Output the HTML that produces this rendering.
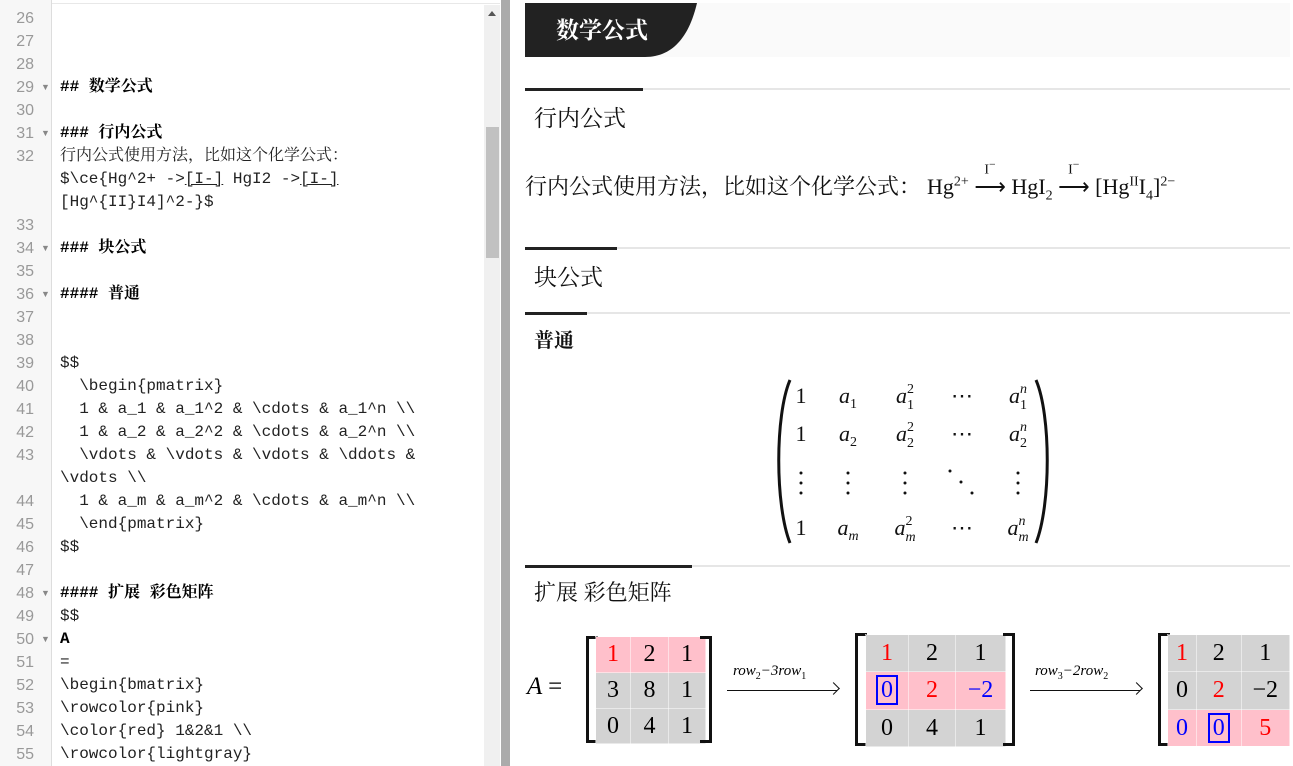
<!DOCTYPE html>
<html><head><meta charset="utf-8"><style>
*{margin:0;padding:0;box-sizing:border-box}
body{width:1293px;height:766px;overflow:hidden;background:#fff;position:relative;font-family:"Liberation Serif","Noto Serif CJK SC",serif}
.gut{position:absolute;left:0;top:0;width:52px;height:766px;background:#f7f7f7;border-right:1px solid #ddd}
.topl{position:absolute;left:0;top:0;width:500px;height:4px;border-bottom:1px solid #e8e8e8}
.ln{position:absolute;left:0;width:34px;text-align:right;font:16px "Liberation Sans",sans-serif;color:#999;height:23px;line-height:23px}
.fold{position:absolute;left:41px;font-size:9px;color:#888;line-height:23px;height:23px}
.cl{position:absolute;left:60px;font:16px/23px "Liberation Mono","Noto Serif CJK SC",monospace;color:#222;white-space:pre;height:23px}
.b{font-weight:bold;color:#000}
.u{text-decoration:underline}
.sb{position:absolute;left:484px;top:5px;width:16px;height:761px;background:#f0f0f0}
.th{position:absolute;left:486px;top:127px;width:13px;height:131px;background:#c1c1c1}
.div{position:absolute;left:501px;top:0;width:9px;height:766px;background:#ababab}
.hdrbg{position:absolute;left:525px;top:3px;width:765px;height:54px;background:#fafafa}
.hdr{position:absolute;left:525px;top:3px;width:172px;height:54px;background:#222;clip-path:path('M0 0 H172 C165 30 150 54 120 54 H0 Z');color:#fff;font:bold 23px/52px "Noto Serif CJK SC",serif;padding-left:31px}
.hl{position:absolute;left:525px;width:765px;height:2px;background:#e6e6e6}
.bar{position:absolute;left:525px;height:3px;background:#222}
.h{position:absolute;left:534px;color:#111;font-family:"Noto Serif CJK SC",serif}
.m{font-family:"Liberation Serif",serif}
table{border-collapse:collapse;position:absolute}
td{text-align:center;font:24px "Liberation Serif",serif;padding:0;border:1px solid rgba(255,255,255,.5)}
.pk{background:#ffc0cb}.gr{background:#d3d3d3}
.r{color:red}.bl{color:#00f}
.bx{border:2px solid #00f;padding:0 3px}
.brk{position:absolute;border:3px solid #111;width:12px}
.brkl{border-right:none}.brkr{border-left:none}
</style></head><body>
<div class="topl"></div>
<div class="gut"></div>
<div class="sb"><div style="position:absolute;left:4px;top:6px;border:4px solid transparent;border-bottom:5px solid #555;border-top:none"></div></div>
<div class="th"></div>
<div class="div"></div>

<div class="ln" style="top:7px">26</div>
<div class="ln" style="top:30px">27</div>
<div class="ln" style="top:53px">28</div>
<div class="ln" style="top:76px">29</div><div class="fold" style="top:76px">▼</div><div class="cl b" style="top:76px">## 数学公式</div>
<div class="ln" style="top:99px">30</div>
<div class="ln" style="top:122px">31</div><div class="fold" style="top:122px">▼</div><div class="cl b" style="top:122px">### 行内公式</div>
<div class="ln" style="top:145px">32</div><div class="cl" style="top:145px">行内公式使用方法，比如这个化学公式：</div>
<div class="cl" style="top:168px">$\ce{Hg^2+ -&gt;<span class="u">[I-]</span> HgI2 -&gt;<span class="u">[I-]</span></div>
<div class="cl" style="top:191px">[Hg^{II}I4]^2-}$</div>
<div class="ln" style="top:214px">33</div>
<div class="ln" style="top:237px">34</div><div class="fold" style="top:237px">▼</div><div class="cl b" style="top:237px">### 块公式</div>
<div class="ln" style="top:260px">35</div>
<div class="ln" style="top:283px">36</div><div class="fold" style="top:283px">▼</div><div class="cl b" style="top:283px">#### 普通</div>
<div class="ln" style="top:306px">37</div>
<div class="ln" style="top:329px">38</div>
<div class="ln" style="top:352px">39</div><div class="cl" style="top:352px">$$</div>
<div class="ln" style="top:375px">40</div><div class="cl" style="top:375px">  \begin{pmatrix}</div>
<div class="ln" style="top:398px">41</div><div class="cl" style="top:398px">  1 &amp; a_1 &amp; a_1^2 &amp; \cdots &amp; a_1^n \\</div>
<div class="ln" style="top:421px">42</div><div class="cl" style="top:421px">  1 &amp; a_2 &amp; a_2^2 &amp; \cdots &amp; a_2^n \\</div>
<div class="ln" style="top:444px">43</div><div class="cl" style="top:444px">  \vdots &amp; \vdots &amp; \vdots &amp; \ddots &amp;</div>
<div class="cl" style="top:467px">\vdots \\</div>
<div class="ln" style="top:490px">44</div><div class="cl" style="top:490px">  1 &amp; a_m &amp; a_m^2 &amp; \cdots &amp; a_m^n \\</div>
<div class="ln" style="top:513px">45</div><div class="cl" style="top:513px">  \end{pmatrix}</div>
<div class="ln" style="top:536px">46</div><div class="cl" style="top:536px">$$</div>
<div class="ln" style="top:559px">47</div>
<div class="ln" style="top:582px">48</div><div class="fold" style="top:582px">▼</div><div class="cl b" style="top:582px">#### 扩展 彩色矩阵</div>
<div class="ln" style="top:605px">49</div><div class="cl" style="top:605px">$$</div>
<div class="ln" style="top:628px">50</div><div class="fold" style="top:628px">▼</div><div class="cl b" style="top:628px">A</div>
<div class="ln" style="top:651px">51</div><div class="cl" style="top:651px">=</div>
<div class="ln" style="top:674px">52</div><div class="cl" style="top:674px">\begin{bmatrix}</div>
<div class="ln" style="top:697px">53</div><div class="cl" style="top:697px">\rowcolor{pink}</div>
<div class="ln" style="top:720px">54</div><div class="cl" style="top:720px">\color{red} 1&amp;2&amp;1 \\</div>
<div class="ln" style="top:743px">55</div><div class="cl" style="top:743px">\rowcolor{lightgray}</div>

<div class="hdrbg"></div>
<div class="hdr">数学公式</div>

<div class="hl" style="top:88px"></div><div class="bar" style="top:88px;width:118px"></div>
<div class="h" style="top:100px;font-size:23px">行内公式</div>
<div style="position:absolute;left:525px;top:170px;font-size:22px;white-space:nowrap;color:#111"><span style="font-family:'Noto Serif CJK SC',serif">行内公式使用方法，比如这个化学公式：</span><span class="m" style="margin-left:6px">Hg<sup style="font-size:14px">2+</sup> <span style="position:relative;display:inline-block"><span style="position:absolute;top:-16px;left:10px;font-size:14px">I<sup>−</sup></span>⟶</span> HgI<sub style="font-size:14px">2</sub> <span style="position:relative;display:inline-block"><span style="position:absolute;top:-16px;left:10px;font-size:14px">I<sup>−</sup></span>⟶</span> [Hg<sup style="font-size:14px">II</sup>I<sub style="font-size:14px">4</sub>]<sup style="font-size:14px">2−</sup></span></div>

<div class="hl" style="top:247px"></div><div class="bar" style="top:247px;width:92px"></div>
<div class="h" style="top:259px;font-size:23px">块公式</div>
<div class="hl" style="top:312px"></div><div class="bar" style="top:312px;width:62px"></div>
<div class="h" style="top:324px;font-size:20px;font-weight:bold">普通</div>

<svg style="position:absolute;left:770px;top:375px" width="290" height="175">
<path d="M20 5 C5 40 5 130 20 168" stroke="#111" stroke-width="3" fill="none"/>
<path d="M266 5 C281 40 281 130 266 168" stroke="#111" stroke-width="3" fill="none"/>
<g font-family="Liberation Serif" font-size="22" fill="#111" text-anchor="middle">
<text x="31" y="28">1</text><text x="31" y="66">1</text><text x="31" y="160">1</text>
<text x="78" y="28" font-style="italic">a<tspan font-size="14" dy="5" font-style="normal">1</tspan></text>
<text x="78" y="66" font-style="italic">a<tspan font-size="14" dy="5" font-style="normal">2</tspan></text>
<text x="78" y="160" font-style="italic">a<tspan font-size="14" dy="5">m</tspan></text>
<text x="135" y="28" font-style="italic">a<tspan font-size="14" dy="-10" font-style="normal">2</tspan><tspan font-size="14" dx="-7" dy="16" font-style="normal">1</tspan></text>
<text x="135" y="66" font-style="italic">a<tspan font-size="14" dy="-10" font-style="normal">2</tspan><tspan font-size="14" dx="-7" dy="16" font-style="normal">2</tspan></text>
<text x="135" y="160" font-style="italic">a<tspan font-size="14" dy="-10" font-style="normal">2</tspan><tspan font-size="14" dx="-7" dy="16">m</tspan></text>
<text x="192" y="28">⋯</text><text x="192" y="66">⋯</text><text x="192" y="160">⋯</text>
<text x="248" y="28" font-style="italic">a<tspan font-size="14" dy="-10">n</tspan><tspan font-size="14" dx="-7" dy="16" font-style="normal">1</tspan></text>
<text x="248" y="66" font-style="italic">a<tspan font-size="14" dy="-10">n</tspan><tspan font-size="14" dx="-7" dy="16" font-style="normal">2</tspan></text>
<text x="248" y="160" font-style="italic">a<tspan font-size="14" dy="-10">n</tspan><tspan font-size="14" dx="-7" dy="16">m</tspan></text>
</g>
<g fill="#111">
<circle cx="31" cy="98" r="1.5"/><circle cx="31" cy="108" r="1.5"/><circle cx="31" cy="118" r="1.5"/>
<circle cx="78" cy="98" r="1.5"/><circle cx="78" cy="108" r="1.5"/><circle cx="78" cy="118" r="1.5"/>
<circle cx="135" cy="98" r="1.5"/><circle cx="135" cy="108" r="1.5"/><circle cx="135" cy="118" r="1.5"/>
<circle cx="180" cy="96" r="1.5"/><circle cx="191" cy="107" r="1.5"/><circle cx="202" cy="118" r="1.5"/>
<circle cx="248" cy="98" r="1.5"/><circle cx="248" cy="108" r="1.5"/><circle cx="248" cy="118" r="1.5"/>
</g></svg>

<div class="hl" style="top:565px"></div><div class="bar" style="top:565px;width:167px"></div>
<div class="h" style="top:576px;font-size:22px">扩展 彩色矩阵</div>

<div style="position:absolute;left:527px;top:673px;font:italic 25px 'Liberation Serif',serif">A <span style="font-style:normal">=</span></div>
<div class="brk brkl" style="left:586px;top:636px;height:107px"></div>
<table style="left:595px;top:636px"><tr class="pk" style="height:36px"><td class="r" style="width:35px">1</td><td style="width:38px">2</td><td style="width:37px">1</td></tr>
<tr class="gr" style="height:36px"><td>3</td><td>8</td><td>1</td></tr>
<tr class="gr" style="height:35px"><td>0</td><td>4</td><td>1</td></tr></table>
<div class="brk brkr" style="left:700px;top:636px;height:107px"></div>

<div style="position:absolute;left:733px;top:663px;font:italic 15px 'Liberation Serif',serif">row<sub style="font-size:10px;font-style:normal">2</sub>−3row<sub style="font-size:10px;font-style:normal">1</sub></div>
<div style="position:absolute;left:727px;top:690px;width:110px;height:1px;background:#111"></div>
<div style="position:absolute;left:829px;top:684px;width:9px;height:9px;border-top:1px solid #111;border-right:1px solid #111;transform:rotate(45deg)"></div>

<div class="brk brkl" style="left:855px;top:633px;height:113px"></div>
<table style="left:865px;top:634px"><tr class="gr" style="height:37px"><td class="r" style="width:43px">1</td><td style="width:47px">2</td><td style="width:50px">1</td></tr>
<tr class="pk" style="height:38px"><td class="bl"><span class="bx">0</span></td><td class="r">2</td><td class="bl">−2</td></tr>
<tr class="gr" style="height:37px"><td>0</td><td>4</td><td>1</td></tr></table>
<div class="brk brkr" style="left:1003px;top:633px;height:113px"></div>

<div style="position:absolute;left:1035px;top:663px;font:italic 15px 'Liberation Serif',serif">row<sub style="font-size:10px;font-style:normal">3</sub>−2row<sub style="font-size:10px;font-style:normal">2</sub></div>
<div style="position:absolute;left:1030px;top:690px;width:110px;height:1px;background:#111"></div>
<div style="position:absolute;left:1132px;top:684px;width:9px;height:9px;border-top:1px solid #111;border-right:1px solid #111;transform:rotate(45deg)"></div>

<div class="brk brkl" style="left:1158px;top:633px;height:113px"></div>
<div style="position:absolute;left:1167px;top:634px;width:123px;height:112px;overflow:hidden">
<table style="left:0;top:0"><tr class="gr" style="height:37px"><td class="r" style="width:33px">1</td><td style="width:50px">2</td><td style="width:54px">1</td></tr>
<tr class="gr" style="height:38px"><td>0</td><td class="r">2</td><td>−2</td></tr>
<tr class="pk" style="height:37px"><td class="bl">0</td><td class="bl"><span class="bx">0</span></td><td class="r">5</td></tr></table></div>
</body></html>
